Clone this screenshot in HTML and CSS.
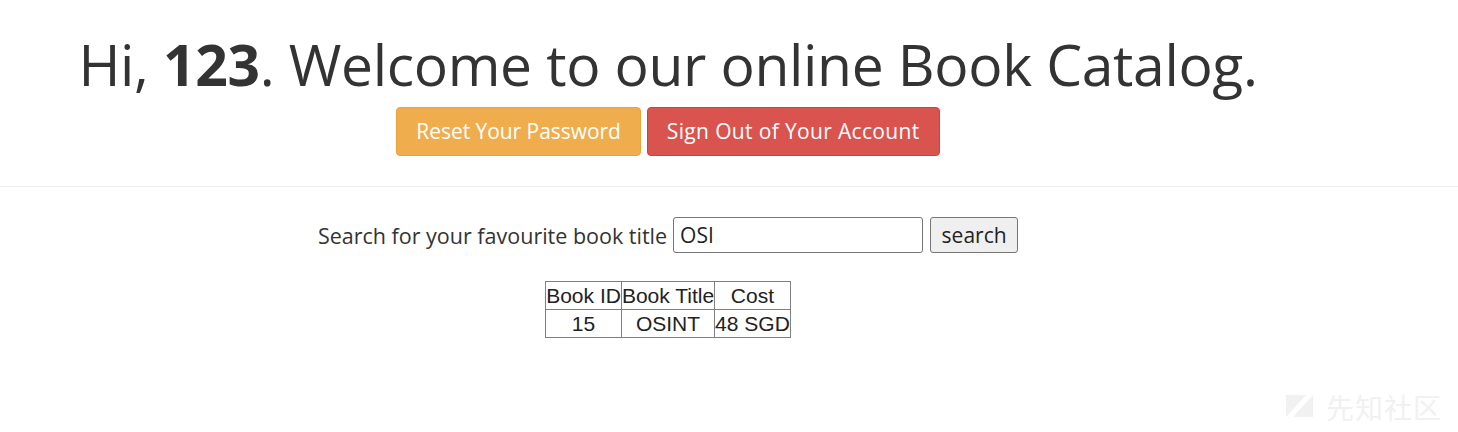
FILE: index.html
```html
<!DOCTYPE html>
<html lang="en">
<head>
<meta charset="utf-8">
<title>Book Catalog</title>
<link rel="stylesheet" href="styles.css">
</head>
<body>
<div class="page">
  <header class="header">
    <h1 class="title">Hi, <b>123</b>. Welcome to our online Book Catalog.</h1>
    <div class="actions">
      <a class="btn btn-warning" href="#">Reset Your Password</a>
      <a class="btn btn-danger" href="#">Sign Out of Your Account</a>
    </div>
  </header>
</div>
<hr class="rule">
<div class="page">
  <form class="search">
    <label class="search-label" for="q">Search for your favourite book title</label>
    <input class="search-input" id="q" type="text" value="OSI">
    <button class="search-btn" type="button">search</button>
  </form>
  <table class="books">
    <tr><th>Book ID</th><th>Book Title</th><th>Cost</th></tr>
    <tr><td>15</td><td>OSINT</td><td>48 SGD</td></tr>
  </table>
</div>
<div class="watermark">
  <svg class="wm-logo" width="28" height="24" viewBox="0 0 28 24"><polygon points="0,0 20,0 0,22" fill="#f1f1f1"/><polygon points="27,0 27,22 7,22" fill="#f1f1f1"/></svg>
  <span class="wm-text">先知社区</span>
</div>
</body>
</html>
```
FILE: styles.css
```css
html, body {
  margin: 0;
  padding: 0;
  background: #fff;
  color: #333;
  font-family: "Open Sans", "Noto Sans", sans-serif;
}
.page {
  width: 1336px;
  display: flex;
  flex-direction: column;
  align-items: center;
}
.header {
  display: flex;
  flex-direction: column;
  align-items: center;
  padding-top: 24px;
}
.title {
  margin: 0;
  font-size: 57px;
  font-weight: 400;
  line-height: 80px;
  letter-spacing: -0.35px;
  color: #333;
}
.title b {
  font-weight: 700;
}
.actions {
  display: flex;
  gap: 6px;
  margin-top: 3px;
}
.btn {
  display: block;
  height: 49px;
  box-sizing: border-box;
  padding: 0 19px;
  line-height: 47px;
  font-size: 21px;
  color: #fff;
  text-decoration: none;
  border: 1px solid transparent;
  border-radius: 4px;
}
.btn-warning {
  background: #f0ad4e;
  border-color: #eea236;
  letter-spacing: -0.05px;
}
.btn-danger {
  background: #d9534f;
  border-color: #d43f3a;
  letter-spacing: 0.35px;
}
.rule {
  margin: 30px 0 0;
  border: 0;
  border-top: 1px solid #eee;
  height: 0;
}
.search {
  display: flex;
  align-items: center;
  margin-top: 30px;
  font-size: 21.5px;
}
.search-label {
  margin-right: 6px;
  color: #333;
}
.search-input {
  box-sizing: border-box;
  width: 250px;
  height: 36px;
  padding: 0 6px;
  font-family: inherit;
  font-size: 21px;
  color: #222;
  border: 1px solid #767676;
  border-radius: 3px;
  margin: 0 7px 0 0;
}
.search-btn {
  box-sizing: border-box;
  width: 88px;
  height: 36px;
  padding: 0;
  font-family: inherit;
  font-size: 21px;
  color: #222;
  background: #efefef;
  border: 1px solid #767676;
  border-radius: 3px;
}
.books {
  margin-top: 28px;
  border-collapse: collapse;
  border: 1px solid #808080;
  font-family: "Liberation Sans", Arial, sans-serif;
  font-size: 21px;
  color: #222;
}
.books th, .books td {
  border: 1px solid #808080;
  padding: 1px 0 0;
  font-weight: 400;
  text-align: center;
  line-height: 26px;
}
.watermark {
  position: absolute;
  right: 16px;
  bottom: 10px;
  display: flex;
  align-items: center;
  gap: 12px;
}
.wm-text {
  font-family: "Noto Sans CJK SC", sans-serif;
  font-size: 28px;
  line-height: 30px;
  color: #f1f1f1;
  letter-spacing: 1px;
}
```
